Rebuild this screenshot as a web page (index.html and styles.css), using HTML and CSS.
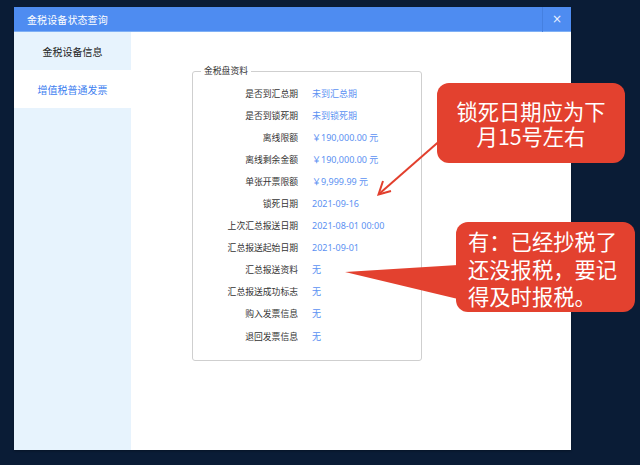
FILE: index.html
```html
<!DOCTYPE html>
<html lang="zh-CN">
<head>
<meta charset="utf-8">
<title>金税设备状态查询</title>
<link rel="stylesheet" href="styles.css">
</head>
<body>
<div class="dialog">
  <div class="titlebar">
    <span class="title">金税设备状态查询</span>
    <span class="sep"></span>
    <span class="close">×</span>
  </div>
  <div class="main">
    <aside class="sidebar">
      <div class="nav-item">金税设备信息</div>
      <div class="nav-item active">增值税普通发票</div>
    </aside>
    <section class="content">
      <fieldset class="panel">
        <legend>金税盘资料</legend>
        <div class="rows">
          <span class="label">是否到汇总期</span><span class="value">未到汇总期</span>
          <span class="label">是否到锁死期</span><span class="value">未到锁死期</span>
          <span class="label">离线限额</span><span class="value">￥190,000.00 元</span>
          <span class="label">离线剩余金额</span><span class="value">￥190,000.00 元</span>
          <span class="label">单张开票限额</span><span class="value">￥9,999.99 元</span>
          <span class="label">锁死日期</span><span class="value">2021-09-16</span>
          <span class="label">上次汇总报送日期</span><span class="value">2021-08-01 00:00</span>
          <span class="label">汇总报送起始日期</span><span class="value">2021-09-01</span>
          <span class="label">汇总报送资料</span><span class="value">无</span>
          <span class="label">汇总报送成功标志</span><span class="value">无</span>
          <span class="label">购入发票信息</span><span class="value">无</span>
          <span class="label">退回发票信息</span><span class="value">无</span>
        </div>
      </fieldset>
    </section>
  </div>
</div>

<svg class="annotations" width="640" height="465" viewBox="0 0 640 465">
  <line x1="443" y1="138" x2="379" y2="194" stroke="#e23f2d" stroke-width="2"/>
  <polyline points="383,181 378.5,194.5 391,191" fill="none" stroke="#e23f2d" stroke-width="2" stroke-linejoin="miter"/>
  <polygon points="458,265 345,272 458,299" fill="#e3412f"/>
</svg>

<div class="callout callout-top">
  <div class="line">锁死日期应为下</div>
  <div class="line">月15号左右</div>
</div>
<div class="callout callout-bottom">
  <div class="line">有：已经抄税了</div>
  <div class="line">还没报税，要记</div>
  <div class="line">得及时报税。</div>
</div>
</body>
</html>
```
FILE: styles.css
```css
* { box-sizing: border-box; }
html, body { margin: 0; padding: 0; }
body {
  width: 640px;
  height: 465px;
  background: #0a1c36;
  font-family: "Noto Sans CJK SC", "Noto Sans", sans-serif;
  overflow: hidden;
  position: relative;
  padding: 7px 0 0 14px;
}
.dialog {
  width: 557px;
  height: 443px;
  background: #ffffff;
  display: flex;
  flex-direction: column;
  box-shadow: 0 1px 2px rgba(0,0,0,0.3);
}
.titlebar {
  height: 25px;
  background: #4e8cf1;
  display: flex;
  align-items: center;
  padding-left: 13px;
  color: #ffffff;
  border-bottom: 1px solid #7fb0f5;
}
.title {
  font-size: 10px;
  flex: 1;
  letter-spacing: 0.1px;
}
.sep {
  width: 1px;
  height: 25px;
  background: #4580e0;
}
.close {
  width: 28px;
  text-align: center;
  font-family: "DejaVu Sans", sans-serif;
  font-size: 12px;
  color: #eaf2ff;
  line-height: 1;
}
.main {
  flex: 1;
  display: flex;
}
.sidebar {
  width: 117px;
  background: #e7f3fd;
  display: flex;
  flex-direction: column;
}
.nav-item {
  height: 38px;
  display: flex;
  align-items: center;
  justify-content: center;
  font-size: 10px;
  color: #222;
}
.nav-item.active {
  background: #ffffff;
  color: #3d7ef0;
}
.content {
  flex: 1;
  padding: 33px 0 0 61px;
}
.panel {
  width: 230px;
  height: 296px;
  margin: 0;
  padding: 5px 0 0 0;
  border: 1px solid #cfcfcf;
  border-radius: 3px;
  min-inline-size: 0;
}
.panel legend {
  font-size: 8.8px;
  line-height: 12px;
  color: #333;
  padding: 0 3px;
  margin-left: 8px;
}
.rows {
  display: grid;
  grid-template-columns: 105px auto;
  column-gap: 14px;
  grid-auto-rows: 22.1px;
  align-items: center;
}
.label {
  text-align: right;
  font-size: 8.8px;
  color: #333;
  white-space: nowrap;
}
.value {
  font-family: "Noto Sans", "Noto Sans CJK SC", sans-serif;
  font-size: 9px;
  color: #5b91f2;
  white-space: nowrap;
}
.annotations {
  position: absolute;
  left: 0;
  top: 0;
  pointer-events: none;
}
.callout {
  position: absolute;
  background: #e3412f;
  color: #ffffff;
  border-radius: 12px;
  font-size: 21.3px;
  display: flex;
  flex-direction: column;
}
.line {
  white-space: nowrap;
}
.callout-top {
  left: 437px;
  top: 83px;
  width: 188px;
  height: 80px;
  justify-content: center;
  align-items: center;
}
.callout-top .line {
  height: 25px;
  line-height: 25px;
}
.callout-bottom {
  left: 456px;
  top: 222px;
  width: 179px;
  height: 90px;
  padding: 5px 0 0 12px;
}
.callout-bottom .line {
  height: 27.5px;
  line-height: 27.5px;
}
```
